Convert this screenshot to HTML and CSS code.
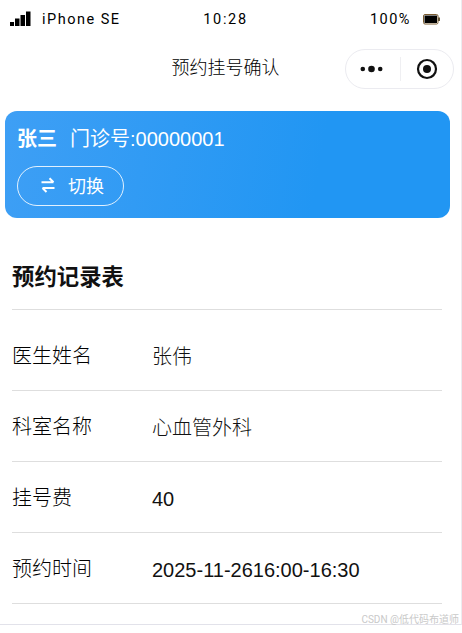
FILE: index.html
```html
<!DOCTYPE html>
<html lang="zh-CN">
<head>
<meta charset="utf-8">
<title>预约挂号确认</title>
<link rel="stylesheet" href="styles.css">
</head>
<body>
<div class="phone">
  <div class="status">
    <div class="status-left">
      <svg class="signal" width="21" height="16" viewBox="0 0 21 16"><rect x="0" y="11" width="4" height="4"/><rect x="5" y="7.500" width="4.500" height="7.500"/><rect x="10.500" y="4" width="4.500" height="11"/><rect x="16" y="0.500" width="4.500" height="14.500"/></svg>
      <span>iPhone SE</span>
    </div>
    <div class="status-time">10:28</div>
    <div class="status-right">
      <span>100%</span>
      <svg class="battery" width="18" height="11" viewBox="0 0 18 11"><rect x="0.500" y="0.500" width="14.500" height="9.500" rx="1.500" fill="none" stroke="#7a5c30"/><rect x="1.500" y="1.500" width="12.500" height="7.500" fill="#000"/><rect x="15" y="3.500" width="2" height="3.500" fill="#6a5a3a"/></svg>
    </div>
  </div>
  <div class="nav">
    <div class="nav-title">预约挂号确认</div>
    <div class="capsule">
      <svg class="dots" width="23" height="8" viewBox="0 0 23 8"><circle cx="2.800" cy="4" r="2.300"/><circle cx="11.500" cy="4" r="3.300"/><circle cx="20.200" cy="4" r="2.300"/></svg>
      <span class="capsule-sep"></span>
      <svg class="target" width="22" height="22" viewBox="0 0 22 22"><circle cx="11" cy="11" r="9" fill="none" stroke="#111" stroke-width="2.200"/><circle cx="11" cy="11" r="4" fill="#111"/></svg>
    </div>
  </div>
  <div class="card">
    <div class="patient"><span class="patient-name">张三</span><span class="patient-no">门诊号:00000001</span></div>
    <div class="switch">
      <svg width="16" height="16" viewBox="0 0 16 16" fill="none" stroke="#fff" stroke-width="2"><path d="M1.500 5.200H13.500M9.500 1.200L13.500 5.200"/><path d="M14.500 11H2.500M6.500 15L2.500 11"/></svg>
      <span>切换</span>
    </div>
  </div>
  <div class="table">
    <h2 class="table-title">预约记录表</h2>
    <div class="row"><div class="label">医生姓名</div><div class="value">张伟</div></div>
    <div class="row"><div class="label">科室名称</div><div class="value">心血管外科</div></div>
    <div class="row"><div class="label">挂号费</div><div class="value">40</div></div>
    <div class="row"><div class="label">预约时间</div><div class="value">2025-11-2616:00-16:30</div></div>
  </div>
</div>
<div class="watermark">CSDN @低代码布道师</div>
</body>
</html>
```
FILE: styles.css
```css
* { box-sizing: border-box; }
html, body { margin: 0; padding: 0; background: #fff; }
body {
  position: relative;
  width: 462px;
  height: 633px;
  overflow: hidden;
  font-family: "Liberation Sans", "Noto Sans CJK SC", sans-serif;
  font-weight: 300;
  color: #000;
}
.phone {
  width: 462px;
  height: 625px;
  border-right: 1px solid #ececf0;
  border-bottom: 1px solid #e2e2ea;
}
.status {
  display: grid;
  grid-template-columns: 1fr auto 1fr;
  align-items: center;
  height: 38px;
  padding: 0 20px 0 10px;
  font-family: Roboto, "Noto Sans CJK SC", sans-serif;
  font-weight: 400;
  font-size: 14.500px;
  letter-spacing: 1.500px;
}
.status-left { display: flex; align-items: center; gap: 11px; }
.signal { fill: #000; }
.status-time { text-align: center; letter-spacing: 1.700px; }
.status-right { display: flex; justify-content: flex-end; align-items: center; gap: 12px; }
.nav {
  position: relative;
  display: flex;
  justify-content: center;
  align-items: center;
  height: 60px;
  padding-right: 10px;
}
.nav-title { font-size: 18px; line-height: 60px; }
.capsule {
  position: absolute;
  right: 7px;
  top: 11px;
  width: 109px;
  height: 40px;
  display: flex;
  align-items: center;
  padding-left: 14px;
  border: 1px solid #ebebf0;
  border-radius: 20px;
  background: #fff;
}
.dots { fill: #111; }
.capsule-sep { width: 1px; height: 24px; background: #efeff2; margin-left: 17px; margin-right: 15px; }
.card {
  margin: 13px 11px 0 5px;
  height: 107px;
  padding: 11px 12px 0;
  border-radius: 12px;
  background: linear-gradient(100deg, #3e9ff5 0%, #2196f3 70%);
  color: #fff;
  font-weight: 400;
}
.patient { display: flex; align-items: center; gap: 13px; height: 30px; }
.patient-name { font-size: 20px; font-weight: 700; }
.patient-no { font-size: 20px; }
.switch {
  display: flex;
  align-items: center;
  gap: 12px;
  width: 107px;
  height: 40px;
  margin-top: 14px;
  padding: 0 0 2px 22px;
  border: 1px solid rgba(255,255,255,.85);
  border-radius: 20px;
  font-size: 18px;
}
.table { margin: 0 19px 0 12px; }
.table-title {
  margin: 0;
  height: 92px;
  padding-top: 42px;
  font-size: 22.400px;
  line-height: 36px;
  font-weight: 700;
  color: #111;
  border-bottom: 1px solid #dedede;
}
.row {
  display: flex;
  height: 71px;
  border-bottom: 1px solid #dedede;
  font-size: 20px;
}
.row:first-of-type { height: 81px; }
.label { width: 140px; padding-top: 18px; line-height: 36px; }
.value { padding-top: 19px; line-height: 36px; color: #111; }
.row:first-of-type .label { padding-top: 28px; }
.row:first-of-type .value { padding-top: 29px; }
.watermark {
  position: absolute;
  right: 3px;
  bottom: 6px;
  font-family: Roboto, "Noto Sans CJK SC", sans-serif;
  font-weight: 400;
  font-size: 10px;
  line-height: 14px;
  color: #c9c9c9;
}
```
